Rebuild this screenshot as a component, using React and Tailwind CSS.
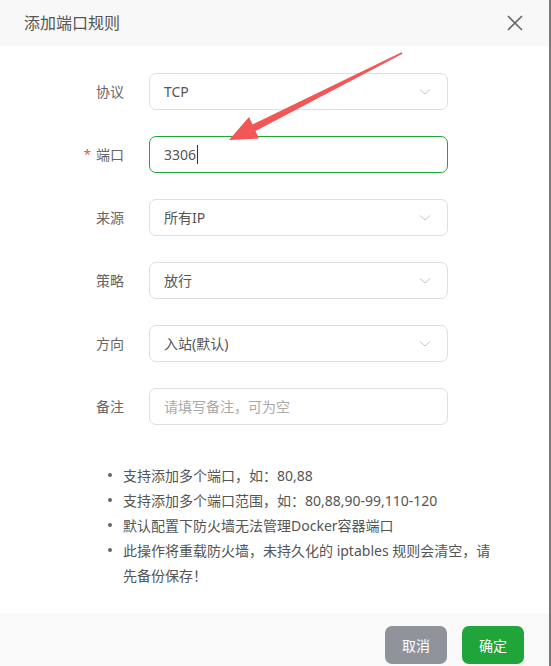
import React from 'react';

const font = { fontFamily: '"Noto Sans", "Noto Sans CJK SC", sans-serif' };

const Chevron = () => (
    <svg width="12" height="8" viewBox="0 0 12 8" className="shrink-0">
        <path d="M1 1.5 L6 6 L11 1.5" fill="none" stroke="#c0c4cc" strokeWidth="1" />
    </svg>
);

const Row = ({ label, required, children }) => (
    <div className="flex items-center mb-[26px]">
        <div className="w-[124px] flex justify-end items-center text-[14px] text-[#666]">
            {required && <span className="text-[#f04848] mr-[5px] text-[13px]">*</span>}
            {label}
        </div>
        <div className="ml-[25px] w-[299px]">{children}</div>
    </div>
);

const Select = ({ value }) => (
    <div className="h-[37px] rounded-[7px] border border-[#dcdfe6] bg-white flex items-center justify-between pl-[14px] pr-[16px] text-[14px] text-[#555]">
        <span>{value}</span>
        <Chevron />
    </div>
);

export default function App() {
    const notes = [
        '支持添加多个端口，如：80,88',
        '支持添加多个端口范围，如：80,88,90-99,110-120',
        '默认配置下防火墙无法管理Docker容器端口',
        '此操作将重载防火墙，未持久化的 iptables 规则会清空，请先备份保存！',
    ];

    return (
        <div className="w-[551px] h-[666px] flex bg-white overflow-hidden relative" style={font}>
            <div className="w-[549px] h-full flex flex-col">
                {/* header */}
                <div className="h-[46px] shrink-0 bg-[#f8f8f8] flex items-center justify-between pl-[24px] pr-[26px]">
                    <span className="text-[16px] text-[#555]">添加端口规则</span>
                    <svg width="16" height="16" viewBox="0 0 16 16">
                        <path d="M1 1 L15 15 M15 1 L1 15" stroke="#666" strokeWidth="1.6" />
                    </svg>
                </div>

                {/* body */}
                <div className="flex-1 bg-white pt-[27px]">
                    <Row label="协议"><Select value="TCP" /></Row>
                    <Row label="端口" required>
                        <div className="h-[37px] rounded-[7px] border border-[#20a53a] bg-white flex items-center pl-[14px] text-[14px] text-[#555]">
                            <span>3306</span>
                            <span className="w-px h-[19px] bg-[#333] ml-px" />
                        </div>
                    </Row>
                    <Row label="来源"><Select value="所有IP" /></Row>
                    <Row label="策略"><Select value="放行" /></Row>
                    <Row label="方向"><Select value="入站(默认)" /></Row>
                    <Row label="备注">
                        <div className="h-[37px] rounded-[7px] border border-[#dcdfe6] bg-white flex items-center pl-[14px] text-[14px] text-[#aaa]">
                            请填写备注，可为空
                        </div>
                    </Row>

                    <ul className="mt-[38px] pl-[108px] pr-[48px] text-[14px] text-[#555] leading-[25px]">
                        {notes.map((n) => (
                            <li key={n} className="flex">
                                <span className="w-[15px] shrink-0 flex justify-start items-start pt-[10px]">
                                    <span className="w-[4px] h-[4px] rounded-full bg-[#666]" />
                                </span>
                                <span>{n}</span>
                            </li>
                        ))}
                    </ul>
                </div>

                {/* footer */}
                <div className="h-[53px] shrink-0 bg-[#f9f9f9] flex justify-end items-start pt-[13px] pr-[25px] gap-[15px]">
                    <button className="w-[62px] h-[38px] rounded-[7px] bg-[#909399] text-white text-[14px]">取消</button>
                    <button className="w-[62px] h-[38px] rounded-[7px] bg-[#20a53a] text-white text-[14px]">确定</button>
                </div>
            </div>
            <div className="w-[2px] h-full bg-[#7a7a7a]" />

            {/* annotation arrow */}
            <svg className="absolute left-0 top-0 pointer-events-none" width="551" height="666">
                <polygon
                    points="229,140 259,138.5 255.5,131 402.5,53.8 401.6,52.3 252.5,124.5 249,117"
                    fill="#f25656"
                />
            </svg>
        </div>
    );
}
